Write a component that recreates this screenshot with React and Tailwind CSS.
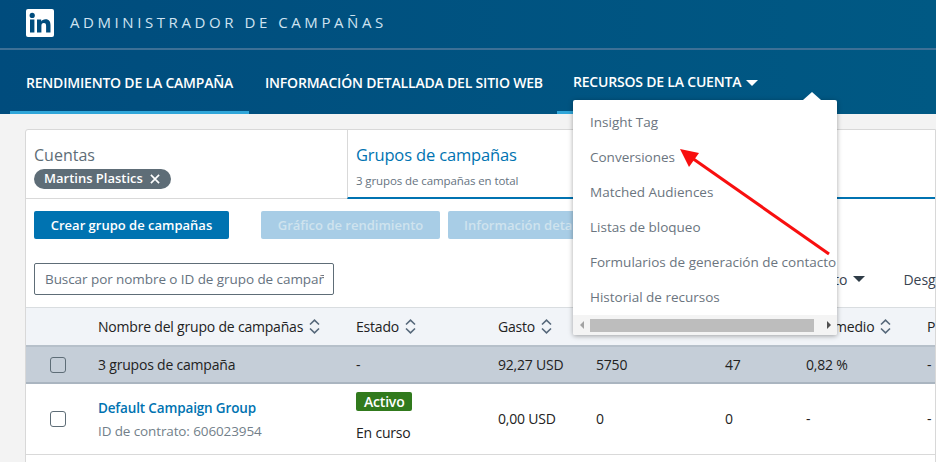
function Sort() {
  return (
    <svg width="11" height="15" viewBox="0 0 11 15" fill="none" stroke="#56687a" strokeWidth="1.6" className="ml-[6px] shrink-0">
      <path d="M1 5.500 L5.500 1.200 L10 5.500" />
      <path d="M1 9.500 L5.500 13.800 L10 9.500" />
    </svg>
  );
}
function Check() {
  return (
    <div className="w-[72px] shrink-0 flex justify-center pr-[8px]">
      <div className="w-4 h-4 rounded-[3px] border border-[#5e6d77]" />
    </div>
  );
}
const items = ["Insight Tag", "Conversiones", "Matched Audiences", "Listas de bloqueo", "Formularios de generación de contacto", "Historial de recursos"];
export default function App() {
  return (
    <div className="relative w-[936px] h-[462px] overflow-hidden bg-[#f3f3f3] font-['Open_Sans',sans-serif] text-[14px] text-[#222]">
      <div className="bg-gradient-to-r from-[#004c7d] to-[#005984]">
        <div className="h-[50px] flex items-center pl-[26px] border-b-2 border-[#3d7096] pb-[3px]">
          <svg width="28" height="28" viewBox="0 0 28 28">
            <rect width="28" height="28" rx="2" fill="#fff" />
            <rect x="4" y="10.5" width="4.4" height="13" fill="#004c7d" />
            <circle cx="6.2" cy="6.4" r="2.6" fill="#004c7d" />
            <path d="M11 10.5h4.2v1.900c.7-1.200 2.200-2.200 4.300-2.200 3.900 0 5 2.500 5 6v7.300h-4.400v-6.500c0-1.700-.4-3-2.200-3-1.900 0-2.500 1.300-2.500 3v6.500H11z" fill="#004c7d" />
          </svg>
          <span className="ml-[16px] text-[15px] tracking-[3.57px] text-[#cfe3f1] whitespace-nowrap">ADMINISTRADOR DE CAMPAÑAS</span>
        </div>
        <div className="h-[64px] flex text-[14px] font-semibold text-white whitespace-nowrap tracking-[-0.2px]">
          <div className="ml-[10px] w-[239px] pl-[16px] pt-[22px] border-b-[3px] border-[#30a6d9]">RENDIMIENTO DE LA CAMPAÑA</div>
          <div className="w-[308px] pl-[16px] pt-[22px]">INFORMACIÓN DETALLADA DEL SITIO WEB</div>
          <div className="flex-1 pl-[16px] pt-[21px] relative">
            <div className="absolute left-0 bottom-0 w-[16px] h-[3px] bg-[#30a6d9]" />
            RECURSOS DE LA CUENTA
            <span className="inline-block ml-[5px] align-[1px] w-0 h-0 border-x-[6px] border-x-transparent border-t-[6px] border-t-white" />
          </div>
        </div>
      </div>

      <div className="ml-[25px] mt-[15px] bg-white border border-[#d8d8d8] rounded-tl-[3px] min-h-[340px]">
        <div className="h-[69px] flex border-b border-[#d9d9d9]">
          <div className="w-[321px] shrink-0 pl-[8px] pt-[14px]">
            <div className="text-[16px] leading-[22px] text-[#5e6d77]">Cuentas</div>
            <div className="mt-[3px] inline-flex items-center h-[20px] rounded-full bg-[#5e6d77] text-white font-semibold text-[13px] pl-[10px] pr-[11px] whitespace-nowrap">
              Martins Plastics
              <svg width="10" height="10" viewBox="0 0 11 11" stroke="#fff" strokeWidth="1.8" className="ml-[7px]"><path d="M1 1 L10 10 M10 1 L1 10" /></svg>
            </div>
          </div>
          <div className="flex-1 border-l border-[#d9d9d9] pl-[8px] pt-[14px] border-b-2 border-b-[#0073b1] -mb-px">
            <div className="text-[16.500px] leading-[22px] font-medium text-[#0073b1] tracking-[-0.15px]">Grupos de campañas</div>
            <div className="mt-[6px] text-[11.500px] tracking-[-0.1px] text-[#66737f]">3 grupos de campañas en total</div>
          </div>
        </div>

        <div className="flex pl-[8px] mt-[12px] font-semibold text-[13px] whitespace-nowrap">
          <div className="w-[195px] h-[28px] pt-[1px] rounded-[2px] bg-[#0073b1] text-white flex items-center justify-center">Crear grupo de campañas</div>
          <div className="ml-[32px] w-[179px] h-[28px] pt-[1px] rounded-[2px] bg-[#a8cde6] text-[#cfe3ee] flex items-center justify-center">Gráfico de rendimiento</div>
          <div className="ml-[8px] w-[200px] h-[28px] pt-[1px] rounded-[2px] bg-[#a8cde6] text-[#cfe3ee] flex items-center pl-[16px]">Información detallada</div>
        </div>

        <div className="flex items-center mt-[24px] pl-[8px] h-[32px] whitespace-nowrap">
          <div className="w-[300px] shrink-0 h-[32px] pt-[1px] rounded-[2px] border border-[#5e6d77] flex items-center pl-[10px] pr-[9px] text-[13.500px] text-[#66737f] tracking-[-0.07px]">
            <span className="overflow-hidden">Buscar por nombre o ID de grupo de campañ</span>
          </div>
          <div className="ml-[500px] shrink-0 flex items-center text-[#38434f]">
            <span>to</span>
            <span className="ml-[6px] w-0 h-0 border-x-[6px] border-x-transparent border-t-[6px] border-t-[#2f3c47]" />
            <span className="ml-[38px]">Desglose</span>
          </div>
        </div>

        <div className="mt-[12px] h-[40px] pb-[1px] flex items-center bg-[#f1f4f8] border-t border-[#d9dde0] border-b-2 border-b-[#b6c0ca] whitespace-nowrap tracking-[-0.2px]">
          <div className="w-[72px] shrink-0" />
          <div className="w-[258px] shrink-0 flex items-center">Nombre del grupo de campañas<Sort /></div>
          <div className="w-[142px] shrink-0 flex items-center">Estado<Sort /></div>
          <div className="w-[98px] shrink-0 flex items-center">Gasto<Sort /></div>
          <div className="w-[210px] shrink-0" />
          <div className="w-[121px] shrink-0 flex items-center">CTR medio<Sort /></div>
          <div>P</div>
        </div>

        <div className="h-[37px] flex items-center bg-[#c5ced8] border-b-2 border-[#aab5c0] whitespace-nowrap tracking-[-0.2px]">
          <Check />
          <div className="w-[258px] shrink-0">3 grupos de campaña</div>
          <div className="w-[142px] shrink-0">-</div>
          <div className="w-[98px] shrink-0">92,27 USD</div>
          <div className="w-[129px] shrink-0">5750</div>
          <div className="w-[81px] shrink-0">47</div>
          <div className="w-[121px] shrink-0">0,82 %</div>
          <div>-</div>
        </div>

        <div className="h-[71px] flex items-center border-b border-[#d9d9d9] whitespace-nowrap tracking-[-0.2px]">
          <Check />
          <div className="w-[258px] shrink-0">
            <div className="font-semibold text-[13.500px] text-[#0073b1] leading-[18px] tracking-[-0.15px]">Default Campaign Group</div>
            <div className="mt-[5px] text-[13.500px] text-[#737f8a] leading-[18px] tracking-[-0.12px]">ID de contrato: 606023954</div>
          </div>
          <div className="w-[142px] shrink-0 pb-[5px]">
            <div className="inline-flex items-center h-[19px] px-[8px] rounded-[2px] bg-[#317a1d] text-white font-semibold">Activo</div>
            <div className="mt-[12px] leading-[18px]">En curso</div>
          </div>
          <div className="w-[98px] shrink-0 pb-[2px]">0,00 USD</div>
          <div className="w-[129px] shrink-0 pb-[2px]">0</div>
          <div className="w-[81px] shrink-0 pb-[2px]">0</div>
          <div className="w-[121px] shrink-0 pb-[2px]">-</div>
          <div className="pb-[2px]">-</div>
        </div>
      </div>

      <div className="absolute left-[573px] top-[100px] w-[264px] h-[235px] bg-white rounded-[2px] shadow-[0_1px_5px_rgba(0,0,0,0.35)] overflow-hidden flex flex-col">
        <div className="pt-[5px] flex-1 whitespace-nowrap text-[13.500px] text-[#6b7580]">
          {items.map((t) => (
            <div key={t} className="h-[35px] flex items-center pl-[17px] font-medium">{t}</div>
          ))}
        </div>
        <div className="h-[21px] bg-[#f4f4f4] flex items-center">
          <span className="ml-[7px] w-0 h-0 border-y-[4px] border-y-transparent border-r-[4px] border-r-[#a3a3a3]" />
          <div className="ml-[6px] w-[224px] h-[13px] bg-[#bdbdbd]" />
          <span className="ml-[13px] w-0 h-0 border-y-[4px] border-y-transparent border-l-[4px] border-l-[#505050]" />
        </div>
      </div>
      <div className="absolute left-[803px] top-[92px] w-0 h-0 border-x-[9px] border-x-transparent border-b-[8px] border-b-white" />

      <svg className="absolute left-[670px] top-[140px]" width="170" height="120" viewBox="670 140 170 120" fill="none">
        <path d="M829 254 L692 158" stroke="#f80f0f" strokeWidth="3" />
        <path d="M680 149 L699 153 L689 167 Z" fill="#f80f0f" />
      </svg>
    </div>
  );
}
